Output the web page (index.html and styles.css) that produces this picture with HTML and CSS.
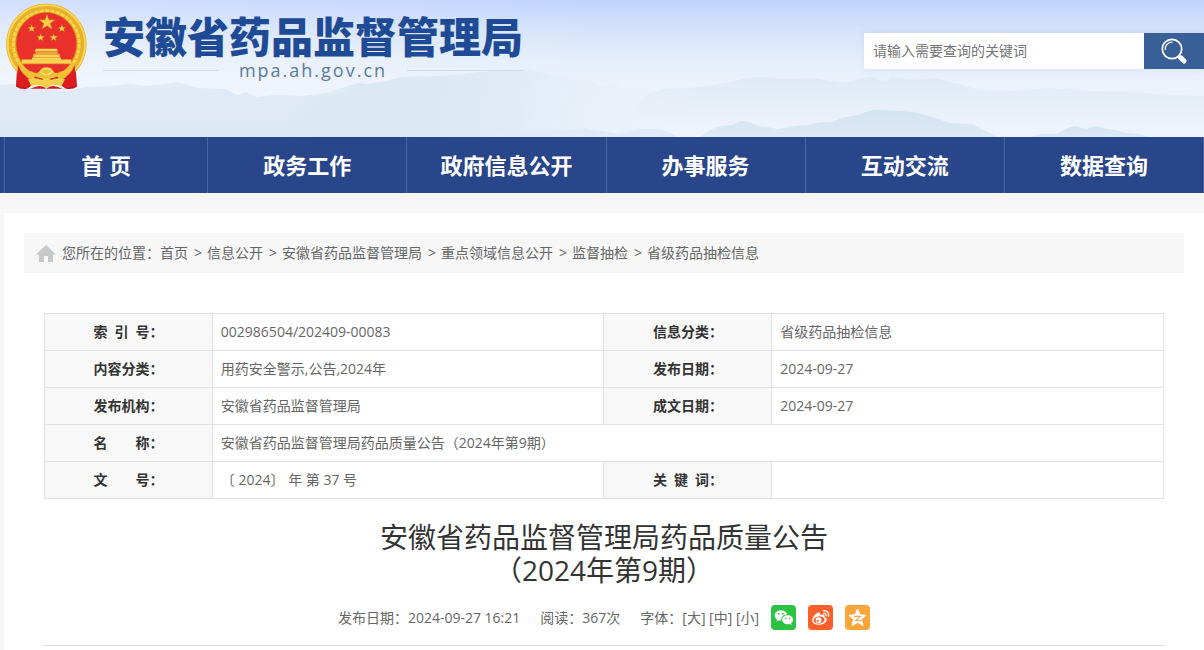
FILE: index.html
```html
<!DOCTYPE html>
<html lang="zh-CN">
<head>
    <meta charset="UTF-8">
    <meta name="viewport" content="width=device-width, initial-scale=1.0">
    <title>安徽省药品监督管理局药品质量公告（2024年第9期）</title>
    <link rel="stylesheet" href="styles.css">
</head>
<body>
    <header class="header">
        <svg class="header-bg" viewBox="0 0 1204 137" preserveAspectRatio="none" aria-hidden="true">
            <defs>
                <linearGradient id="sky" x1="0" y1="0" x2="0" y2="1">
                    <stop offset="0" stop-color="#bfd3fe"/>
                    <stop offset="0.2" stop-color="#d4e2fa"/>
                    <stop offset="0.42" stop-color="#e4eefa"/>
                    <stop offset="0.6" stop-color="#ecf1fb"/>
                    <stop offset="1" stop-color="#eef3fc"/>
                </linearGradient>
                <linearGradient id="glow" x1="0" y1="0" x2="1" y2="0">
                    <stop offset="0" stop-color="#fff" stop-opacity="0.3"/>
                    <stop offset="0.5" stop-color="#fff" stop-opacity="0"/>
                </linearGradient>
                <linearGradient id="farLeft" x1="0" y1="0" x2="0" y2="1">
                    <stop offset="0" stop-color="#e2ebf6"/>
                    <stop offset="1" stop-color="#dce9f5"/>
                </linearGradient>
                <linearGradient id="farMid" gradientUnits="userSpaceOnUse" x1="290" y1="0" x2="700" y2="60">
                    <stop offset="0" stop-color="#dae8f4" stop-opacity="0"/>
                    <stop offset="0.2" stop-color="#dae8f4"/>
                    <stop offset="0.55" stop-color="#dfeaf6"/>
                    <stop offset="1" stop-color="#edf3fb" stop-opacity="0"/>
                </linearGradient>
                <linearGradient id="farRight" x1="0" y1="0" x2="0" y2="1">
                    <stop offset="0" stop-color="#dfe9f5"/>
                    <stop offset="0.7" stop-color="#ebf1fa" stop-opacity="0.8"/>
                    <stop offset="1" stop-color="#ecf2fb" stop-opacity="0"/>
                </linearGradient>
                <linearGradient id="near" x1="0" y1="0" x2="0" y2="1">
                    <stop offset="0" stop-color="#d3e3f0"/>
                    <stop offset="1" stop-color="#dceaf5"/>
                </linearGradient>
            </defs>
            <rect width="1204" height="137" fill="url(#sky)"/>
            <rect width="1204" height="137" fill="url(#glow)"/>
            <path fill="url(#farRight)" d="M600 137L650 93 665 89 690 88 705 86 732 82 742 79 760 77 785 79 810 78 838 82 850 82 862 78 872 77 883 81 892 77 912 79 935 78 958 84 980 90 1010 91 1050 88 1090 91 1130 92 1170 95 1204 96V137Z"/>
            <path fill="url(#farLeft)" d="M0 137V85L15 84 30 88 58 91 66 91 85 87 112 86 128 84 145 86 165 84 176 82 186 84 198 88 225 89 238 95 246 92 256 97 275 95 300 96 326 93 345 95 380 100 440 112 520 137Z"/>
            <path fill="url(#farMid)" d="M290 137V100L326 93 345 87 358 83 366 84 385 81 402 77 430 76 455 75 480 72 495 71 508 69 530 70 548 74 560 76 575 80 590 81 600 86 611 84 618 85 625 90 637 86 650 90 665 92 678 94 690 90 706 97V137Z"/>
            <path fill="#e0ebf6" d="M480 137L500 133 512 131 540 132 552 129 566 131 585 128 602 131 618 134 640 129 656 129 668 132 678 137Z"/>
            <path fill="url(#near)" d="M700 137L712 129 722 126 732 125 740 121 748 122 760 126 778 129 795 126 808 125 820 122 832 122 842 118 858 115 866 112 875 110 900 111 915 112 932 117 950 123 972 124 986 131 998 137Z"/>
            <path fill="url(#near)" d="M1030 137L1042 134 1056 134 1066 129 1074 126 1086 129 1096 126 1106 129 1116 130 1125 133 1140 134 1148 137Z"/>
        </svg>
        <div class="header-inner">
            <a class="logo" href="#">
                <svg class="emblem" viewBox="18 8 243 260" role="img" aria-label="国徽">
                    <path fill="#c9151b" d="M52 192L48 258Q62 268 80 265L110 245H170L198 265Q220 268 231 258L226 192Z"/>
                    <path fill="none" stroke="#f0342f" stroke-width="4" d="M62 205L58 258M76 220L72 260M216 205L222 256M203 220L210 260"/>
                    <ellipse cx="139" cy="131" rx="121" ry="122" fill="#e9b12c"/>
                    <ellipse cx="139" cy="131" rx="116" ry="117" fill="none" stroke="#f9da58" stroke-width="5"/>
                    <ellipse cx="139" cy="131" rx="106" ry="107" fill="none" stroke="#e5ad25" stroke-width="4" stroke-dasharray="7 6"/>
                    <ellipse cx="139" cy="131" rx="99" ry="100" fill="none" stroke="#f6d34a" stroke-width="9" stroke-dasharray="13 3"/>
                    <ellipse cx="139" cy="130" rx="91" ry="94" fill="#e9302b" stroke="#c8860f" stroke-width="2"/>
                    <g fill="#f6cf45" stroke="#b5651a" stroke-width="1">
                        <path d="M141 41L147 58 165 58 151 69 156 86 141 76 126 86 131 69 117 58 135 58Z"/>
                        <path d="M95 71L98 80 107 80 100 85 103 94 95 89 87 94 90 85 83 80 92 80Z"/>
                        <path d="M186 71L189 80 198 80 191 85 194 94 186 89 178 94 181 85 174 80 183 80Z"/>
                        <path d="M122 99L125 107 134 107 127 113 130 121 122 116 114 121 117 113 110 107 119 107Z"/>
                        <path d="M161 99L164 107 173 107 166 113 169 121 161 116 153 121 156 113 149 107 158 107Z"/>
                    </g>
                    <path fill="#f8d351" d="M108 145H171L174 153H104ZM107 155H172V160H107ZM100 161H179V170H100ZM96 171H183V177H214V190H65V177H96Z"/>
                    <path stroke="#d8951e" stroke-width="2" d="M104 154H175M100 161H179M65 191H214"/>
                    <path fill="#e9302b" d="M66 192H212Q206 204 194 212H84Q72 204 66 192Z"/>
                    <path fill="#f0c036" d="M54 190L68 192Q84 212 106 220L98 236Q66 222 54 190ZM224 190L210 192Q194 212 172 220L180 236Q212 222 224 190Z"/>
                    <path fill="#dc1c1e" d="M54 194Q66 226 98 240L84 262Q62 262 50 250ZM224 194Q212 226 180 240L194 262Q216 262 229 250Z"/>
                    <path fill="#efbd31" d="M100 218Q118 220 124 204Q139 196 155 204Q160 220 178 218Q172 231 154 227Q139 240 124 227Q106 231 100 218Z"/>
                    <path fill="none" stroke="#fbe06a" stroke-width="4" d="M120 214Q139 194 158 214Q139 232 120 214"/>
                    <path fill="#cf1b1d" d="M104 228Q124 234 139 238Q154 234 174 228V240H104Z"/>
                    <path fill="#f6d04a" d="M84 236Q112 230 125 238Q139 232 154 238Q168 230 195 236L184 258Q157 247 139 264Q121 247 94 258Z"/>
                    <path fill="#cf1b1d" d="M92 264Q124 248 139 265H92ZM186 264Q155 248 139 265H186Z"/>
                </svg>
                <span class="logo-text">
                    <span class="logo-name">安徽省药品监督管理局</span>
                    <span class="logo-domain">mpa.ah.gov.cn</span>
                </span>
            </a>
            <form class="search" action="#">
                <input class="search-input" type="text" placeholder="请输入需要查询的关键词" aria-label="请输入需要查询的关键词">
                <button class="search-btn" type="submit" aria-label="搜索">
                    <svg width="26" height="26" viewBox="0 0 26 26" fill="none" stroke="#fff">
                        <circle cx="11" cy="11" r="9.7" stroke-width="1.7"/>
                        <path stroke-width="1.2" d="M4.2 12A7 7 0 0 1 11.5 4.2"/>
                        <path stroke-width="2" d="M17.5 17.5L19.5 19.5"/>
                        <path stroke-width="5" stroke-linecap="round" d="M19.8 19.8L23 23"/>
                    </svg>
                </button>
            </form>
        </div>
    </header>

    <nav class="nav">
        <ul class="nav-list">
            <li><a href="#">首 页</a></li>
            <li><a href="#">政务工作</a></li>
            <li><a href="#">政府信息公开</a></li>
            <li><a href="#">办事服务</a></li>
            <li><a href="#">互动交流</a></li>
            <li><a href="#">数据查询</a></li>
        </ul>
    </nav>

    <main class="main">
        <div class="position">
            <svg class="home" width="20" height="17" viewBox="0 0 20 17" aria-hidden="true">
                <path fill="#c8c8c8" d="M10 0L20 9.5H17V17H12V11H8V17H3V9.5H0Z"/>
            </svg>
            <span>您所在的位置：</span>
            <a href="#">首页</a><span class="sep">&gt;</span>
            <a href="#">信息公开</a><span class="sep">&gt;</span>
            <a href="#">安徽省药品监督管理局</a><span class="sep">&gt;</span>
            <a href="#">重点领域信息公开</a><span class="sep">&gt;</span>
            <a href="#">监督抽检</a><span class="sep">&gt;</span>
            <a href="#">省级药品抽检信息</a>
        </div>

        <article class="article">
            <table class="info">
                <tbody>
                    <tr>
                        <th scope="row">索&ensp;引&ensp;号：</th>
                        <td>002986504/202409-00083</td>
                        <th scope="row">信息分类：</th>
                        <td>省级药品抽检信息</td>
                    </tr>
                    <tr>
                        <th scope="row">内容分类：</th>
                        <td>用药安全警示,公告,2024年</td>
                        <th scope="row">发布日期：</th>
                        <td>2024-09-27</td>
                    </tr>
                    <tr>
                        <th scope="row">发布机构：</th>
                        <td>安徽省药品监督管理局</td>
                        <th scope="row">成文日期：</th>
                        <td>2024-09-27</td>
                    </tr>
                    <tr>
                        <th scope="row">名&emsp;&emsp;称：</th>
                        <td colspan="3">安徽省药品监督管理局药品质量公告（2024年第9期）</td>
                    </tr>
                    <tr>
                        <th scope="row">文&emsp;&emsp;号：</th>
                        <td>〔 2024〕 年 第 37 号</td>
                        <th scope="row">关&ensp;键&ensp;词：</th>
                        <td></td>
                    </tr>
                </tbody>
            </table>

            <h1 class="title">安徽省药品监督管理局药品质量公告<br>（2024年第9期）</h1>

            <div class="meta">
                <span>发布日期：2024-09-27 16:21</span>
                <span>阅读：367次</span>
                <span class="font-size">字体：<button type="button">[大]</button> <button type="button">[中]</button> <button type="button">[小]</button></span>
                <div class="share">
                    <a class="wechat" href="#" aria-label="微信">
                        <svg width="25" height="25" viewBox="0 0 25 25">
                            <path fill="#fff" d="M10 5.2C6.4 5.2 3.7 7.5 3.7 10.4C3.7 12.1 4.6 13.500 6 14.500L5.400 16.500L7.800 15.300C8.500 15.500 9.200 15.600 10 15.600C10.200 11.800 13 9.400 16.200 9.300C15.500 6.900 13 5.200 10 5.200Z"/>
                            <path fill="#fff" d="M16.6 10.2C13.5 10.2 11.2 12.2 11.2 14.7C11.2 17.3 13.5 19.3 16.6 19.3C17.2 19.3 17.9 19.2 18.5 19L20.6 20L20 18.2C21.3 17.4 22.1 16.1 22.1 14.7C22.1 12.2 19.6 10.2 16.6 10.2Z"/>
                            <g fill="#2bc341"><circle cx="7.8" cy="8.8" r=".9"/><circle cx="12" cy="8.8" r=".9"/><circle cx="14.8" cy="13.3" r=".8"/><circle cx="18.4" cy="13.3" r=".8"/></g>
                        </svg>
                    </a>
                    <a class="weibo" href="#" aria-label="微博">
                        <svg width="25" height="25" viewBox="0 0 25 25">
                            <path fill="#fff" d="M10.5 7.5C12 7.2 12.7 8.3 12.1 10C14 9.3 16.8 9.2 16.5 11.4C16.4 12 16.8 12.2 17.4 12.5C19.7 13.7 18.9 16.9 16 18.5C12.5 20.5 6.5 20.3 4.6 17.3C2.8 14 7 8.3 10.5 7.5Z"/>
                            <ellipse cx="11" cy="15" rx="5.6" ry="3.6" fill="#ff5f2b" transform="rotate(-8 11 15)"/>
                            <circle cx="10.5" cy="15.2" r="2.9" fill="#fff"/>
                            <circle cx="9.7" cy="15.8" r="1.1" fill="#ff5f2b"/>
                            <path fill="none" stroke="#fff" stroke-width="1.4" stroke-linecap="round" d="M15.5 5.9C18.9 5.2 21.5 8 20.4 11.3M16 8.5C17.5 8.2 18.5 9.4 18 10.8"/>
                        </svg>
                    </a>
                    <a class="qzone" href="#" aria-label="QQ空间">
                        <svg width="25" height="25" viewBox="0 0 25 25">
                            <path fill="#fff" stroke="#fff" stroke-linejoin="round" d="M12.5 4L15 9.8 21 10.3 16.5 14.4 18 20.6 12.5 17.4 7 20.6 8.5 14.4 4 10.3 10 9.8Z"/>
                            <path fill="none" stroke="#fba53a" stroke-width="1.1" d="M9 11.6C11 11 13.5 11.1 15.4 11.6L10.6 15.4C12.600 15.900 14.400 15.900 16.600 15.200"/>
                        </svg>
                    </a>
                </div>
            </div>
        </article>
    </main>
</body>
</html>
```
FILE: styles.css
```css
* {
    margin: 0;
    padding: 0;
    box-sizing: border-box;
}

body {
    display: flex;
    flex-direction: column;
    min-height: 100vh;
    background: #f7f7f7;
    color: #666;
    font-family: "Open Sans", "Noto Sans CJK SC", sans-serif;
    font-size: 14px;
    line-height: 20px;
}

a {
    color: inherit;
    text-decoration: none;
}

ul {
    list-style: none;
}

input,
button {
    border: none;
    font: inherit;
}

button {
    cursor: pointer;
}

/* header */
.header {
    position: relative;
}

.header-bg {
    position: absolute;
    width: 100%;
    height: 100%;
}

.header-inner {
    position: relative;
    display: flex;
    justify-content: space-between;
    align-items: flex-start;
    min-height: 137px;
    margin-left: 4px;
}

.logo {
    display: flex;
    gap: 16px;
    padding: 3px 0 0 2px;
}

.emblem {
    width: 81px;
    height: 87px;
}

.logo-text {
    display: flex;
    flex-direction: column;
    padding-top: 8px;
}

.logo-name {
    color: #1f4b96;
    font-family: "Noto Sans CJK SC", sans-serif;
    font-size: 42px;
    font-weight: 900;
    line-height: 48px;
}

.logo-domain {
    display: flex;
    align-items: center;
    gap: 20px;
    color: #5b7a9d;
    font-size: 18px;
    letter-spacing: 2px;
    line-height: 22px;
}

.logo-domain::before,
.logo-domain::after {
    content: "";
    flex: 1;
    height: 1px;
    background: #d5dbe2;
}

.search {
    display: flex;
    margin-top: 33px;
    box-shadow: 0 0 8px rgba(90, 120, 170, 0.12);
}

.search-input {
    width: 280px;
    height: 36px;
    padding: 0 9px 2px;
    background: #fff;
    color: #333;
}

.search-input::placeholder {
    color: #757575;
}

.search-btn {
    display: flex;
    align-items: center;
    justify-content: center;
    width: 60px;
    background: #386097;
}

/* nav */
.nav {
    background: #29468a;
}

.nav-list {
    display: flex;
    margin-left: 4px;
    border-left: 1px solid #486498;
}

.nav-list li {
    flex: 1;
    border-right: 1px solid #486498;
}

.nav-list li:first-child {
    padding: 0 2px;
}

.nav-list a {
    display: block;
    color: #fff;
    font-size: 22px;
    font-weight: bold;
    line-height: 56px;
    text-align: center;
}

/* content */
.main {
    flex: 1;
    margin: 20px 0 0 4px;
    padding: 20px 20px 0;
    background: #fff;
}

.position {
    display: flex;
    align-items: center;
    padding: 10px 12px;
    background: #f7f7f7;
}

.home {
    margin-right: 6px;
}

.sep {
    margin: 0 5px 0 6px;
}

.article {
    padding: 40px 20px 0;
}

.info {
    width: 100%;
    border-collapse: collapse;
    table-layout: fixed;
}

.info th,
.info td {
    height: 37px;
    border: 1px solid #e3e3e3;
}

.info th {
    width: 15%;
    background: #f8f8f8;
    color: #333;
    font-weight: bold;
}

.info td {
    width: 35%;
    padding: 0 8px;
}

.title {
    margin-top: 22px;
    color: #333;
    font-size: 28px;
    font-weight: normal;
    line-height: 33px;
    text-align: center;
}

.meta {
    display: flex;
    align-items: center;
    justify-content: center;
    gap: 20px;
    padding: 18px 0 15px;
    border-bottom: 1px solid #ddd;
}

.font-size button {
    background: none;
    color: #666;
}

.share {
    display: flex;
    gap: 12px;
    margin-left: -8px;
}

.share a {
    height: 25px;
    border-radius: 4px;
}

.wechat {
    background: #2bc341;
}

.weibo {
    background: #ff5f2b;
}

.qzone {
    background: #fba53a;
}
```
